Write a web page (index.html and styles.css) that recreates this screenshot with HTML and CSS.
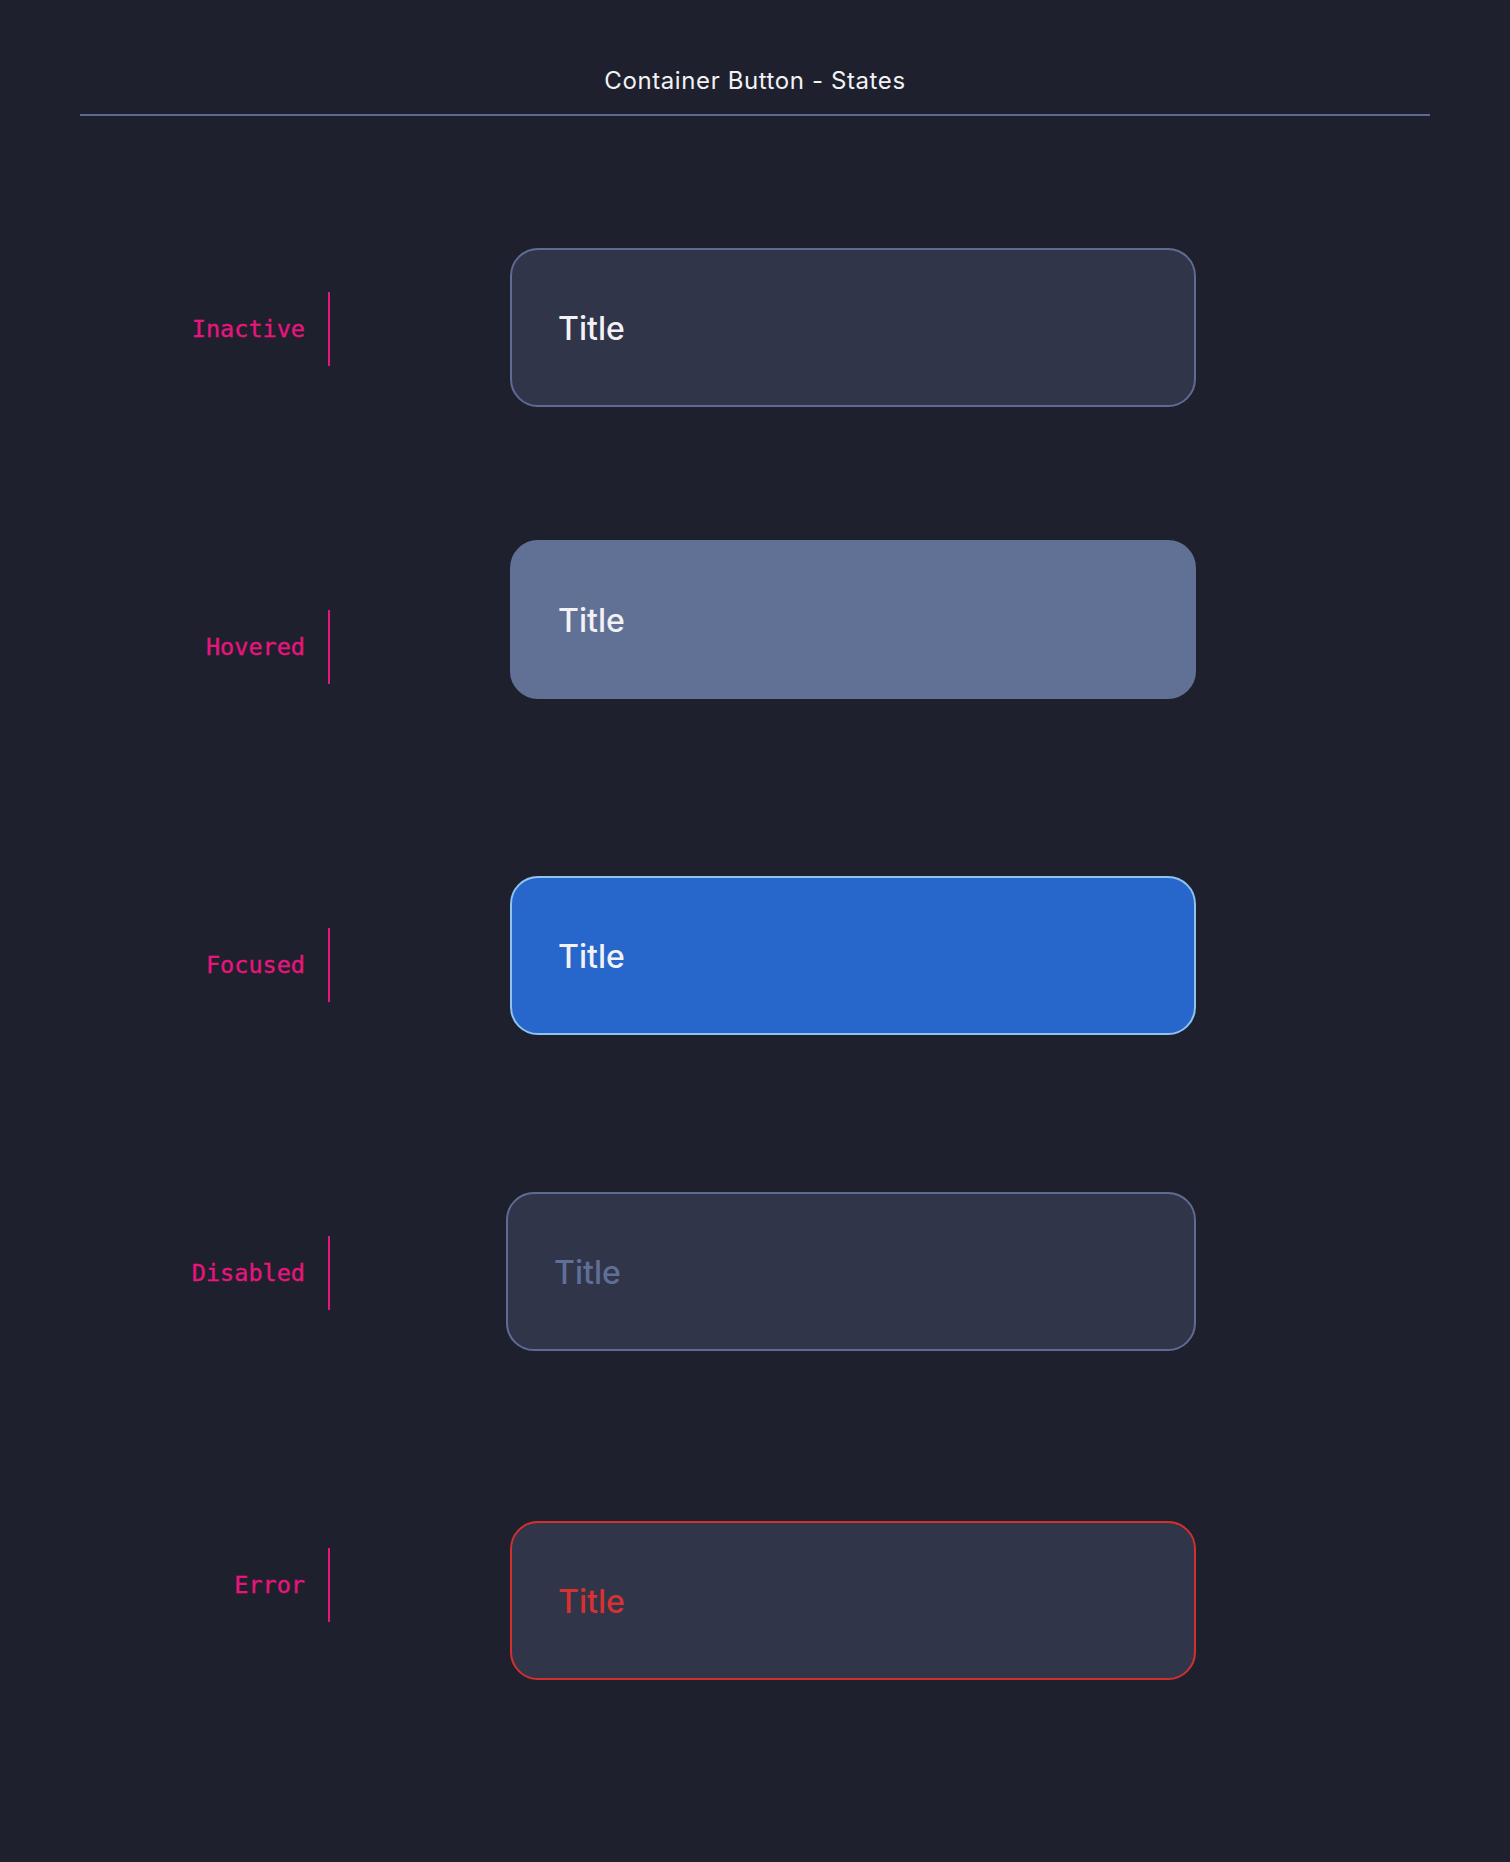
FILE: index.html
```html
<!DOCTYPE html>
<html lang="en">
<head>
<meta charset="UTF-8" />
<meta name="viewport" content="width=device-width, initial-scale=1" />
<title>Container Button - States</title>
<link rel="stylesheet" href="styles.css">
</head>
<body>

<header class="page-header">
  <h1>Container Button - States</h1>
  <div class="divider"></div>
</header>

<main class="states">
  <div class="state state-inactive">
    <div class="state-label"><span>Inactive</span></div>
    <button class="container-btn">Title</button>
  </div>

  <div class="state state-hovered">
    <div class="state-label"><span>Hovered</span></div>
    <button class="container-btn is-hovered">Title</button>
  </div>

  <div class="state state-focused">
    <div class="state-label"><span>Focused</span></div>
    <button class="container-btn is-focused">Title</button>
  </div>

  <div class="state state-disabled">
    <div class="state-label"><span>Disabled</span></div>
    <button class="container-btn is-disabled" disabled>Title</button>
  </div>

  <div class="state state-error">
    <div class="state-label"><span>Error</span></div>
    <button class="container-btn is-error">Title</button>
  </div>
</main>

</body>
</html>
```

FILE: styles.css
```css
body {
  margin: 0;
  background: #1f202d;
  color: #f2f2f5;
  font-family: Inter, "Noto Sans", sans-serif;
}

.page-header {
  padding-top: 66px;
}

.page-header h1 {
  margin: 0;
  text-align: center;
  font-size: 24px;
  font-weight: 400;
  line-height: 30px;
  letter-spacing: 0.6px;
}

.divider {
  height: 2px;
  margin: 18px 80px 0;
  background: #5b6a91;
}

.states {
  padding-bottom: 180px;
}

.state {
  display: flex;
  align-items: flex-start;
}

/* label + pink marker line */
.state-label {
  width: 330px;
  height: 74px;
  display: flex;
  justify-content: flex-end;
  align-items: center;
  gap: 23px;
  flex-shrink: 0;
  font-family: "DejaVu Sans Mono", "Liberation Mono", monospace;
  font-size: 23.5px;
  color: #e8157f;
  -webkit-text-stroke: 0.3px #e8157f;
}

.state-label::after {
  content: '';
  width: 2px;
  height: 74px;
  background: #e8157f;
}

.container-btn {
  box-sizing: border-box;
  width: 686px;
  height: 159px;
  margin-left: 180px;
  padding: 2px 0 0 46px;
  text-align: left;
  border: 2px solid #5e6c94;
  border-radius: 28px;
  background: #313549;
  color: #f2f2f5;
  font-family: Inter, "Noto Sans", sans-serif;
  font-size: 32px;
  font-weight: 500;
  cursor: pointer;
}

.is-hovered {
  background: #617196;
  border-color: #617196;
}

.is-focused {
  background: #2767cc;
  border-color: #8fc3f0;
}

.is-disabled {
  width: 690px;
  margin-left: 176px;
  color: #5f6f97;
  cursor: default;
}

.is-error {
  border-color: #d2302e;
  color: #d63232;
}

/* row spacing */
.state-inactive { margin-top: 132px; }
.state-hovered { margin-top: 133px; }
.state-focused { margin-top: 177px; }
.state-disabled { margin-top: 157px; }
.state-error { margin-top: 170px; }

.state-inactive .state-label { margin-top: 44px; }
.state-hovered .state-label { margin-top: 70px; }
.state-focused .state-label { margin-top: 52px; }
.state-disabled .state-label { margin-top: 44px; }
.state-error .state-label { margin-top: 27px; }
```
